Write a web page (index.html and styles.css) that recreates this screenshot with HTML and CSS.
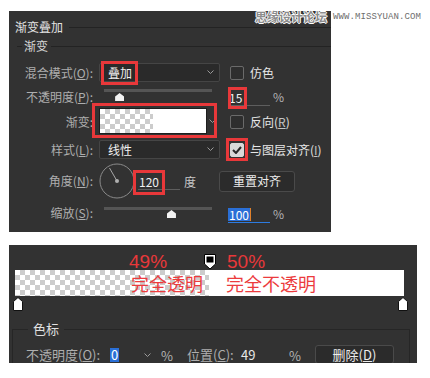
FILE: index.html
```html
<!DOCTYPE html>
<html lang="zh-CN">
<head>
  <meta charset="UTF-8" />
  <title>渐变叠加</title>
  <link rel="stylesheet" href="styles.css">
</head>
<body>
  <div class="watermark">
    <span class="wm-cn">思缘设计论坛</span>
    <span class="wm-en">WWW.MISSYUAN.COM</span>
  </div>

  <div class="panel panel-top">
    <div class="title-row">
      <span class="title">渐变叠加</span>
      <span class="rule"></span>
    </div>
    <div class="group-row">
      <span class="rule rule-short"></span>
      <span class="group-title">渐变</span>
      <span class="rule"></span>
    </div>

    <div class="row row-blend">
      <span class="label">混合模式(<u>O</u>):</span>
      <div class="select">
        <span class="value">叠加</span>
        <svg class="chevron" width="7" height="5" viewBox="0 0 7 5"><polyline points="0.5,0.5 3.5,3.5 6.5,0.5" /></svg>
        <span class="mark mark-blend"></span>
      </div>
      <div class="check"><span class="box"></span>仿色</div>
    </div>

    <div class="row row-opacity">
      <span class="label">不透明度(<u>P</u>):</span>
      <div class="slider">
        <div class="track"></div>
        <span class="thumb" style="left: 14%"></span>
      </div>
      <div class="num">
        <span class="num-text">15</span>
        <span class="mark mark-opacity"></span>
      </div>
      <span class="unit">%</span>
    </div>

    <div class="row row-gradient">
      <span class="label">渐变:</span>
      <div class="grad-pick">
        <div class="grad-preview"></div>
        <svg class="chevron" width="7" height="5" viewBox="0 0 7 5"><polyline points="0.5,0.5 3.5,3.5 6.5,0.5" /></svg>
        <span class="mark mark-gradient"></span>
      </div>
      <div class="check"><span class="box"></span>反向(<u>R</u>)</div>
    </div>

    <div class="row row-style">
      <span class="label">样式(<u>L</u>):</span>
      <div class="select">
        <span class="value">线性</span>
        <svg class="chevron" width="7" height="5" viewBox="0 0 7 5"><polyline points="0.5,0.5 3.5,3.5 6.5,0.5" /></svg>
      </div>
      <div class="check">
        <span class="box checked">
          <svg width="10" height="8" viewBox="0 0 10 8"><polyline points="1,4 4,7 9,1" /></svg>
          <span class="mark mark-check"></span>
        </span>
        与图层对齐(<u>I</u>)
      </div>
    </div>

    <div class="row row-angle">
      <span class="label">角度(<u>N</u>):</span>
      <svg class="dial" width="36" height="36" viewBox="0 0 36 36">
        <circle cx="18" cy="18" r="17" />
        <line x1="18" y1="18" x2="10.5" y2="5" />
        <circle class="dot" cx="18" cy="18" r="2" />
      </svg>
      <div class="num num-angle">
        <span class="num-text">120</span>
        <span class="mark mark-angle"></span>
      </div>
      <span class="unit unit-deg">度</span>
      <button class="btn btn-reset">重置对齐</button>
    </div>

    <div class="row row-scale">
      <span class="label">缩放(<u>S</u>):</span>
      <div class="slider">
        <div class="track"></div>
        <span class="thumb" style="left: 62%"></span>
      </div>
      <div class="num num-active">
        <span class="num-text selected">100</span><span class="caret"></span>
      </div>
      <span class="unit">%</span>
    </div>
  </div>

  <div class="panel panel-bottom">
    <div class="pct-row">
      <span class="pct">49%</span>
      <svg class="midstop" width="15" height="17" viewBox="0 0 15 17">
        <path d="M1.5 1.5 H12.5 V11 L7 16 L1.5 11 Z" />
        <rect x="3.5" y="3.5" width="7" height="6" />
      </svg>
      <span class="pct pct-right">50%</span>
    </div>
    <div class="bar">
      <div class="bar-half bar-clear"><span class="bar-text">完全透明</span></div>
      <div class="bar-half bar-solid"><span class="bar-text">完全不透明</span></div>
    </div>
    <div class="stops">
      <svg class="stop" width="10" height="14" viewBox="0 0 10 14"><path d="M5 0.5 L9.5 4.5 V13.5 H0.5 V4.5 Z" /></svg>
      <svg class="stop" width="10" height="14" viewBox="0 0 10 14"><path d="M5 0.5 L9.5 4.5 V13.5 H0.5 V4.5 Z" /></svg>
    </div>
    <div class="stop-group">
      <span class="stop-title">色标</span>
      <div class="stop-row">
        <span class="label2">不透明度(<u>O</u>):</span>
        <div class="num-sel">
          <span class="selected">0</span>
          <svg class="chevron" width="7" height="5" viewBox="0 0 7 5"><polyline points="0.5,0.5 3.5,3.5 6.5,0.5" /></svg>
        </div>
        <span class="unit2">%</span>
        <span class="label2 label-pos">位置(<u>C</u>):</span>
        <span class="num2">49</span>
        <span class="unit2 unit-pos">%</span>
        <button class="btn btn-delete">删除(<u>D</u>)</button>
      </div>
    </div>
  </div>
</body>
</html>
```

FILE: styles.css
```css
body {
  margin: 0;
  padding: 11px 0 0 9px;
  height: 378px;
  box-sizing: border-box;
  overflow: hidden;
  background-color: #ffffff;
  font-family: "Noto Sans CJK SC", "Noto Sans", sans-serif;
  font-size: 12px;
  color: #dcdcdc;
}

u {
  text-decoration: underline;
  text-underline-offset: 1px;
}

/* watermark in the corner */
.watermark {
  position: absolute;
  top: 9px;
  left: 255px;
  display: flex;
  align-items: center;
  gap: 6px;
  z-index: 5;
}
.wm-cn {
  font-size: 12px;
  font-weight: bold;
  color: #8c8c8c;
  line-height: 16px;
  text-shadow: 1px 0 #fff, -1px 0 #fff, 0 1px #fff, 0 -1px #fff;
}
.wm-en {
  font-family: "Liberation Mono", monospace;
  font-size: 9px;
  color: #6e6e6e;
  letter-spacing: 0.1px;
}

.panel {
  background-color: #323232;
  overflow: hidden;
}

.panel-top {
  width: 322px;
  height: 221px;
  padding-top: 7px;
  box-sizing: border-box;
}

.rule {
  flex: 1;
  height: 1px;
  background-color: #232323;
}

.title-row {
  display: flex;
  align-items: center;
  height: 18px;
  padding-left: 6px;
}
.title {
  font-size: 12px;
  color: #e2e2e2;
  margin-right: 6px;
  line-height: 18px;
}

.group-row {
  display: flex;
  align-items: center;
  height: 20px;
  padding-left: 8px;
  margin-bottom: 4px;
}
.rule-short {
  flex: none;
  width: 5px;
}
.group-title {
  color: #d6d6d6;
  margin: 0 3px 0 2px;
  line-height: 18px;
}

.row {
  display: flex;
  align-items: center;
  padding-left: 15px;
}
.row-blend { height: 25px; }
.row-opacity { height: 23px; }
.row-gradient { height: 28px; }
.row-style { height: 27px; }
.row-angle { height: 36px; }
.row-scale { height: 28px; }

.label {
  width: 69px;
  text-align: right;
  margin-right: 6px;
  color: #aeaeae;
  white-space: nowrap;
  line-height: 16px;
}

.select {
  position: relative;
  width: 121px;
  height: 19px;
  box-sizing: border-box;
  border: 1px solid #454545;
  border-radius: 2px;
  background-color: #2a2a2a;
  display: flex;
  align-items: center;
  justify-content: space-between;
  padding: 0 5px 0 8px;
}
.value {
  color: #f0f0f0;
  line-height: 16px;
}
.chevron polyline {
  fill: none;
  stroke: #9a9a9a;
  stroke-width: 1;
}

.check {
  display: flex;
  align-items: center;
  margin-left: 10px;
  color: #e6e6e6;
  white-space: nowrap;
  line-height: 16px;
}
.check u {
  color: #c4c4c4;
}
.box {
  position: relative;
  width: 14px;
  height: 14px;
  box-sizing: border-box;
  border: 1px solid #6a6a6a;
  border-radius: 2px;
  background-color: #2e2e2e;
  margin-right: 6px;
  display: flex;
  align-items: center;
  justify-content: center;
}
.box.checked {
  background-color: #d9d9d9;
  border-color: #d9d9d9;
}
.box.checked polyline {
  fill: none;
  stroke: #2a2a2a;
  stroke-width: 2;
}

/* red annotation boxes */
.mark {
  position: absolute;
  border: 3px solid #e8383a;
  box-sizing: border-box;
  pointer-events: none;
}
.mark-blend { left: 1px; top: -3px; width: 37px; height: 24px; }
.mark-opacity { left: 0; top: -4px; width: 19px; height: 22px; }
.mark-gradient { left: -7px; top: -5px; width: 125px; height: 35px; }
.mark-check { left: -5px; top: -6px; width: 22px; height: 23px; }
.mark-angle { left: -5px; top: -5px; width: 32px; height: 25px; }

.slider {
  position: relative;
  align-self: flex-start;
  width: 108px;
  height: 100%;
  margin: 0 16px 0 5px;
}
.track {
  height: 3px;
  background-color: #555555;
}
.row-opacity .track { margin-top: 4px; }
.row-scale .track { margin-top: 8px; }
.thumb {
  position: absolute;
  top: 100%;
  width: 9px;
  height: 8px;
  margin-left: -4px;
  background-color: #f2f2f2;
  clip-path: polygon(50% 0, 100% 45%, 100% 100%, 0 100%, 0 45%);
}
.row-opacity .thumb { top: 8px; }
.row-scale .thumb { top: 11px; }

.num {
  position: relative;
  width: 42px;
  height: 15px;
  box-sizing: border-box;
  border-bottom: 1px solid #5e5e5e;
  display: flex;
  align-items: center;
}
.row-opacity .num { margin-top: 3px; }
.num-text {
  color: #f0f0f0;
  padding-left: 1px;
  line-height: 13px;
}
.unit {
  margin-left: 3px;
  color: #b4b4b4;
}

.grad-pick {
  position: relative;
  align-self: flex-start;
  width: 121px;
  height: 26px;
  display: flex;
  align-items: center;
}
.grad-preview {
  width: 108px;
  height: 26px;
  box-sizing: border-box;
  border: 1px solid #1e1e1e;
  background-image:
    linear-gradient(to right, transparent 50%, #ffffff 50%),
    conic-gradient(#cccccc 25%, #ffffff 0 50%, #cccccc 0 75%, #ffffff 0);
  background-size: 100% 100%, 10px 10px;
  margin-right: 2px;
}

.dial circle {
  fill: none;
  stroke: #8a8a8a;
  stroke-width: 1;
}
.dial line {
  stroke: #a8a8a8;
  stroke-width: 1;
}
.dial .dot {
  fill: #b0b0b0;
  stroke: none;
}
.num-angle {
  margin-left: 3px;
  margin-top: 2px;
}
.unit-deg {
  margin-left: 4px;
  color: #c8c8c8;
}

.btn {
  font-family: "Noto Sans CJK SC", sans-serif;
  font-size: 12px;
  color: #ececec;
  background-color: #2b2b2b;
  border: 1px solid #4a4a4a;
  border-radius: 3px;
  padding: 0;
}
.btn-reset {
  width: 76px;
  height: 21px;
  margin-left: 23px;
  line-height: 18px;
}

.num-active {
  border-bottom-color: #2d7be0;
  margin-top: 4px;
}
.selected {
  background-color: #2a6fd6;
  color: #ffffff;
  line-height: 13px;
  padding: 0 1px;
}
.caret {
  width: 1px;
  height: 13px;
  background-color: #e0802a;
}

/* bottom panel */
.panel-bottom {
  width: 408px;
  height: 118px;
  margin-top: 13px;
  position: relative;
}

.pct-row {
  display: flex;
  align-items: flex-end;
  height: 25px;
  padding-left: 120px;
}
.pct {
  font-family: "Liberation Sans", sans-serif;
  font-size: 19px;
  color: #e8383a;
  line-height: 19px;
  margin-bottom: -1px;
}
.midstop {
  margin: 0 9px 0 36px;
  align-self: flex-end;
}
.midstop path {
  fill: #ffffff;
  stroke: #000000;
  stroke-width: 1;
}
.midstop rect {
  fill: #000000;
}

.bar {
  display: flex;
  height: 26px;
  margin: 0 13px 0 6px;
}
.bar-half {
  display: flex;
  align-items: center;
}
.bar-clear {
  width: 194px;
  justify-content: flex-end;
  padding-right: 6px;
  box-sizing: border-box;
  background-image: conic-gradient(#cccccc 25%, #ffffff 0 50%, #cccccc 0 75%, #ffffff 0);
  background-size: 10px 10px;
}
.bar-solid {
  flex: 1;
  background-color: #ffffff;
  padding-left: 17px;
}
.bar-text {
  font-size: 18px;
  color: #ec3b3d;
  line-height: 20px;
}

.stops {
  display: flex;
  justify-content: space-between;
  height: 14px;
  margin-top: 1px;
  padding: 0 9px 0 4px;
}
.stop path {
  fill: #ffffff;
  stroke: #111111;
  stroke-width: 1;
}

.stop-group {
  margin: 18px 7px 0 3px;
  border: 1px solid #262626;
  border-bottom: none;
  height: 60px;
}
.stop-title {
  display: block;
  width: fit-content;
  margin: -9px 0 0 15px;
  padding: 0 5px;
  background-color: #323232;
  color: #e0e0e0;
  font-size: 13px;
  line-height: 16px;
}

.stop-row {
  display: flex;
  align-items: center;
  height: 22px;
  margin-top: 7px;
  padding-left: 13px;
  font-size: 13px;
}
.label2 {
  width: 74px;
  color: #aeaeae;
  white-space: nowrap;
  line-height: 16px;
}
.num-sel {
  display: flex;
  align-items: center;
  justify-content: space-between;
  width: 41px;
  margin-left: 10px;
  padding-right: 4px;
}
.num-sel .selected {
  padding: 0 1px;
  line-height: 14px;
}
.unit2 {
  width: 12px;
  margin-left: 6px;
  color: #b4b4b4;
}
.label-pos {
  width: 46px;
  margin-left: 14px;
}
.num2 {
  width: 44px;
  margin-left: 6px;
  padding-left: 2px;
  box-sizing: border-box;
  color: #e8e8e8;
  border-bottom: 1px solid #5e5e5e;
  line-height: 17px;
}
.unit-pos {
  margin-left: 6px;
}
.btn-delete {
  width: 79px;
  height: 19px;
  margin-left: 14px;
  margin-top: 1px;
  align-self: flex-start;
  font-size: 13px;
  line-height: 17px;
}
```
